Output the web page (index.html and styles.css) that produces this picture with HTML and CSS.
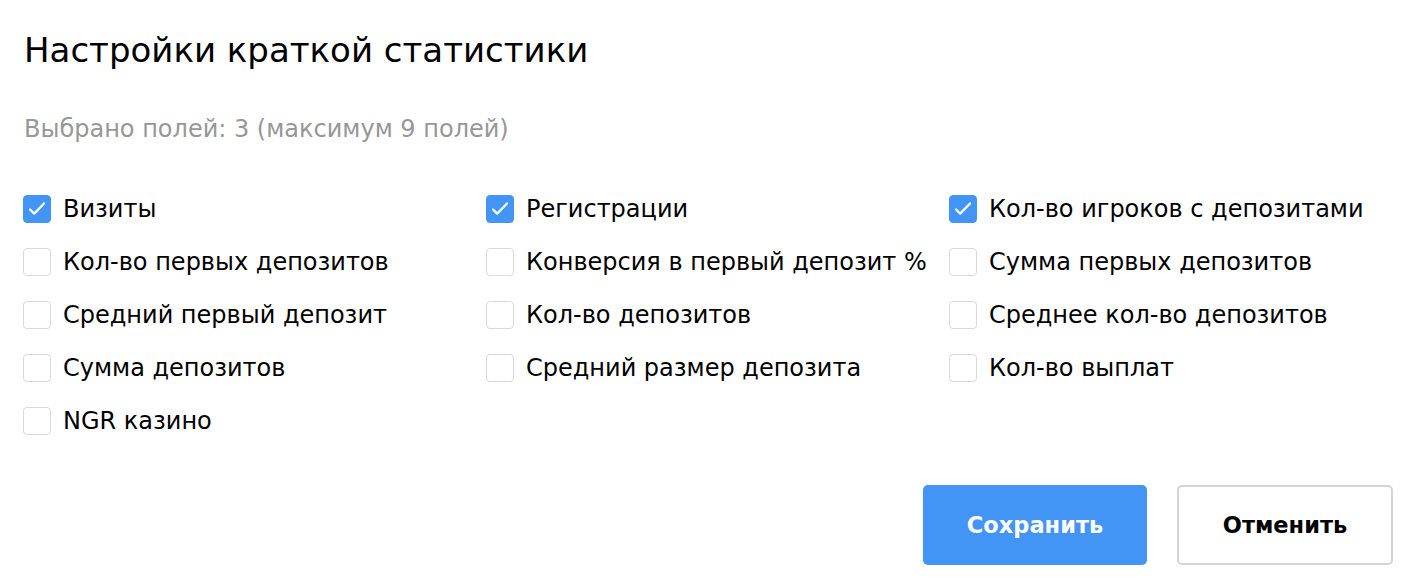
FILE: index.html
```html
<!DOCTYPE html>
<html lang="ru">
<head>
<meta charset="utf-8">
<link rel="stylesheet" href="styles.css">
</head>
<body>
<div class="dialog">
  <h1 class="title">Настройки краткой статистики</h1>
  <p class="subtitle">Выбрано полей: 3 (максимум 9 полей)</p>
  <div class="grid">
    <label class="item"><span class="box checked"><svg viewBox="0 0 28 28" width="28" height="28"><path d="M6.5 14.5l4.5 4.5L21.5 8" fill="none" stroke="#fff" stroke-width="2.4" stroke-linecap="round" stroke-linejoin="round"/></svg></span><span class="label">Визиты</span></label>
    <label class="item"><span class="box checked"><svg viewBox="0 0 28 28" width="28" height="28"><path d="M6.5 14.5l4.5 4.5L21.5 8" fill="none" stroke="#fff" stroke-width="2.4" stroke-linecap="round" stroke-linejoin="round"/></svg></span><span class="label">Регистрации</span></label>
    <label class="item"><span class="box checked"><svg viewBox="0 0 28 28" width="28" height="28"><path d="M6.5 14.5l4.5 4.5L21.5 8" fill="none" stroke="#fff" stroke-width="2.4" stroke-linecap="round" stroke-linejoin="round"/></svg></span><span class="label">Кол-во игроков с депозитами</span></label>
    <label class="item"><span class="box"></span><span class="label">Кол-во первых депозитов</span></label>
    <label class="item"><span class="box"></span><span class="label">Конверсия в первый депозит %</span></label>
    <label class="item"><span class="box"></span><span class="label">Сумма первых депозитов</span></label>
    <label class="item"><span class="box"></span><span class="label">Средний первый депозит</span></label>
    <label class="item"><span class="box"></span><span class="label">Кол-во депозитов</span></label>
    <label class="item"><span class="box"></span><span class="label">Среднее кол-во депозитов</span></label>
    <label class="item"><span class="box"></span><span class="label">Сумма депозитов</span></label>
    <label class="item"><span class="box"></span><span class="label">Средний размер депозита</span></label>
    <label class="item"><span class="box"></span><span class="label">Кол-во выплат</span></label>
    <label class="item"><span class="box"></span><span class="label">NGR казино</span></label>
  </div>
  <div class="actions">
    <button class="btn primary">Сохранить</button>
    <button class="btn secondary">Отменить</button>
  </div>
</div>
</body>
</html>
```
FILE: styles.css
```css
* { box-sizing: border-box; }
html, body { margin: 0; padding: 0; background: #fff; }
body {
  font-family: "DejaVu Sans", "Noto Sans", sans-serif;
  color: #000;
  width: 1416px;
  height: 586px;
  overflow: hidden;
}
.dialog {
  padding: 30px 23px 0 23px;
}
.title {
  margin: 0;
  font-size: 34px;
  font-weight: 400;
  line-height: 40px;
  padding-left: 1px;
}
.subtitle {
  margin: 44px 0 0 0;
  font-size: 24px;
  line-height: 30px;
  color: #979797;
  padding-left: 1px;
}
.grid {
  margin-top: 51px;
  display: grid;
  grid-template-columns: repeat(3, 463px);
  row-gap: 25px;
}
.item {
  display: flex;
  align-items: center;
  height: 28px;
}
.box {
  width: 28px;
  height: 28px;
  border: 1px solid #d9d9d9;
  border-radius: 4px;
  flex: 0 0 28px;
  display: flex;
  align-items: center;
  justify-content: center;
}
.box.checked {
  background: #4395f5;
  border-color: #4395f5;
}
.box svg { display: block; }
.label {
  margin-left: 12px;
  font-size: 24px;
  line-height: 28px;
  white-space: nowrap;
}
.actions {
  display: flex;
  justify-content: flex-end;
  gap: 30px;
  margin-top: 50px;
}
.btn {
  height: 80px;
  border-radius: 5px;
  font-family: inherit;
  font-size: 22.5px;
  font-weight: 700;
  cursor: pointer;
}
.primary {
  width: 224px;
  background: #4395f5;
  color: #fff;
  border: none;
}
.secondary {
  width: 216px;
  background: #fff;
  color: #000;
  border: 2px solid #d4d4d4;
}
```
